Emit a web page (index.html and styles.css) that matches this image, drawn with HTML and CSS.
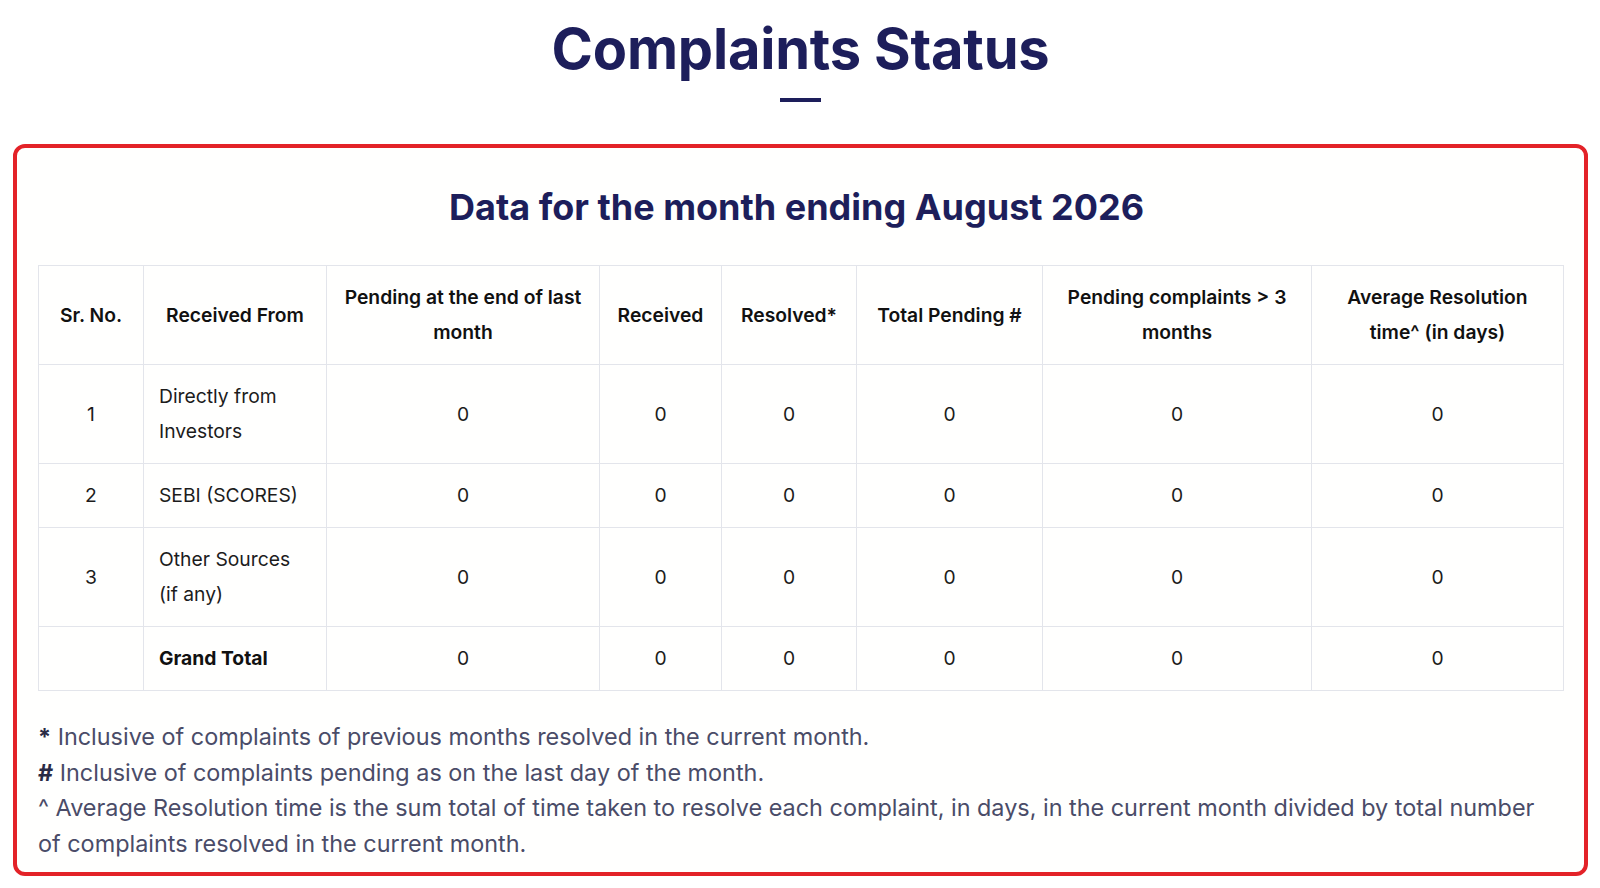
FILE: index.html
```html
<!DOCTYPE html>
<html lang="en">
<head>
<meta charset="utf-8">
<title>Complaints Status</title>
<link rel="stylesheet" href="styles.css">
</head>
<body>
<main class="page">
  <header class="page-head">
    <h1 class="page-title">Complaints Status</h1>
    <span class="title-bar"></span>
  </header>
  <section class="card">
    <h2 class="card-title">Data for the month ending August 2026</h2>
    <table class="status-table">
      <colgroup>
        <col class="c1"><col class="c2"><col class="c3"><col class="c4"><col class="c5"><col class="c6"><col class="c7"><col class="c8">
      </colgroup>
      <thead>
        <tr>
          <th>Sr. No.</th>
          <th>Received From</th>
          <th>Pending at the end of last month</th>
          <th>Received</th>
          <th>Resolved*</th>
          <th>Total Pending #</th>
          <th>Pending complaints &gt; 3 months</th>
          <th>Average Resolution time^ (in days)</th>
        </tr>
      </thead>
      <tbody>
        <tr>
          <td>1</td><td class="src">Directly from Investors</td><td>0</td><td>0</td><td>0</td><td>0</td><td>0</td><td>0</td>
        </tr>
        <tr>
          <td>2</td><td class="src">SEBI (SCORES)</td><td>0</td><td>0</td><td>0</td><td>0</td><td>0</td><td>0</td>
        </tr>
        <tr>
          <td>3</td><td class="src">Other Sources (if any)</td><td>0</td><td>0</td><td>0</td><td>0</td><td>0</td><td>0</td>
        </tr>
        <tr>
          <td></td><td class="src total">Grand Total</td><td>0</td><td>0</td><td>0</td><td>0</td><td>0</td><td>0</td>
        </tr>
      </tbody>
    </table>
    <div class="notes">
      <p><b>*</b> Inclusive of complaints of previous months resolved in the current month.</p>
      <p><b>#</b> Inclusive of complaints pending as on the last day of the month.</p>
      <p>^ Average Resolution time is the sum total of time taken to resolve each complaint, in days, in the current month divided by total number of complaints resolved in the current month.</p>
    </div>
  </section>
</main>
</body>
</html>
```
FILE: styles.css
```css
* { box-sizing: border-box; }
html, body { margin: 0; padding: 0; background: #ffffff; }
body {
  font-family: Inter, "Noto Sans", "Liberation Sans", sans-serif;
  color: #1a1a1a;
}
.page {
  padding: 16px 12px 0 13px;
}
.page-head {
  display: flex;
  flex-direction: column;
  align-items: center;
}
.page-title {
  margin: 0;
  font-size: 56px;
  line-height: 67px;
  font-weight: 700;
  color: #1d1e5b;
  letter-spacing: -0.2px;
}
.title-bar {
  display: block;
  width: 41px;
  height: 4px;
  margin-top: 15px;
  background: #1d1e5b;
}
.card {
  margin-top: 42px;
  border: 4px solid #e32228;
  border-radius: 12px;
  padding: 38px 21px 10px 21px;
  background: #fffffe;
}
.card-title {
  margin: 0;
  padding-right: 8px;
  text-align: center;
  font-size: 36px;
  line-height: 43px;
  font-weight: 700;
  color: #1d1e5b;
}
.status-table {
  margin-top: 36px;
  width: 100%;
  border-collapse: collapse;
  table-layout: fixed;
  font-size: 19.3px;
}
.c1 { width: 105px; }
.c2 { width: 183px; }
.c3 { width: 273px; }
.c4 { width: 122px; }
.c5 { width: 135px; }
.c6 { width: 186px; }
.c7 { width: 269px; }
.c8 { width: 252px; }
.status-table th,
.status-table td {
  border: 1px solid #e3e5eb;
  padding: 14px 15px;
  line-height: 35px;
  text-align: center;
  vertical-align: middle;
}
.status-table th {
  font-weight: 600;
  color: #111111;
}
.status-table td {
  font-weight: 400;
  color: #1c1c1c;
}
.status-table td.src {
  text-align: left;
}
.status-table td.total {
  font-weight: 700;
  color: #111111;
}
.notes {
  margin-top: 28px;
  font-size: 23.4px;
  line-height: 35.7px;
  color: #4a4c68;
}
.notes p { margin: 0; }
.notes b { color: #2a2b45; font-weight: 700; }
```
